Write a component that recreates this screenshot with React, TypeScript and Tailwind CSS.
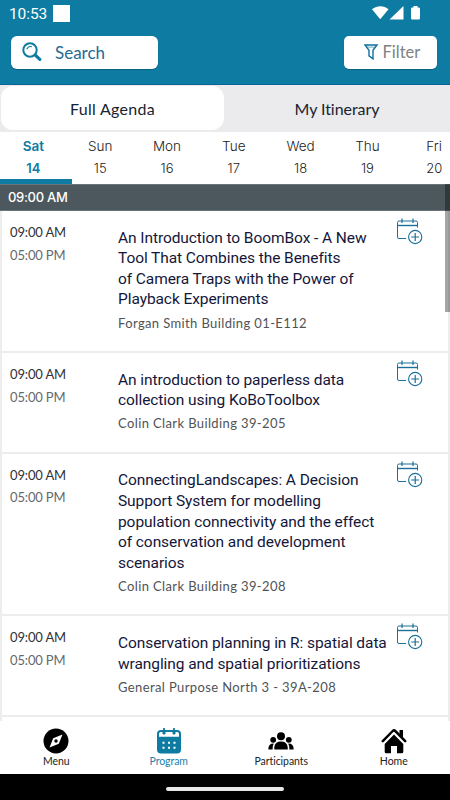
interface Session {
  title: string[];
  room: string;
}

const days = [
  { name: "Sat", date: "14" },
  { name: "Sun", date: "15" },
  { name: "Mon", date: "16" },
  { name: "Tue", date: "17" },
  { name: "Wed", date: "18" },
  { name: "Thu", date: "19" },
  { name: "Fri", date: "20" },
];

const sessions: Session[] = [
  {
    title: [
      "An Introduction to BoomBox - A New",
      "Tool That Combines the Benefits",
      "of Camera Traps with the Power of",
      "Playback Experiments",
    ],
    room: "Forgan Smith Building 01-E112",
  },
  {
    title: ["An introduction to paperless data", "collection using KoBoToolbox"],
    room: "Colin Clark Building 39-205",
  },
  {
    title: [
      "ConnectingLandscapes: A Decision",
      "Support System for modelling",
      "population connectivity and the effect",
      "of conservation and development",
      "scenarios",
    ],
    room: "Colin Clark Building 39-208",
  },
  {
    title: ["Conservation planning in R: spatial data", "wrangling and spatial prioritizations"],
    room: "General Purpose North 3 - 39A-208",
  },
];

function StatusBar() {
  return (
    <div className="flex h-[27px] items-center pl-[9px] pr-[29px] text-white">
      <span className="font-['Roboto',sans-serif] text-[15.5px] leading-[18px] tracking-[-0.1px]">10:53</span>
      <span className="ml-[6px] h-[17px] w-[17px] bg-white" />
      <svg className="ml-auto" width="49" height="16" viewBox="0 0 49 16" fill="currentColor">
        <path d="M0 3.2C5-.8 12-.8 16.5 3.2L8.2 13.2Z" />
        <path d="M31.5 0V13.6H17.5Z" />
        <path d="M41.5 0h4v1.5h1.2q1.3 0 1.3 1.3v9.5q0 1.3-1.3 1.3h-6.4q-1.3 0-1.3-1.3V2.8q0-1.3 1.3-1.3H41.5Z" />
      </svg>
    </div>
  );
}

function SearchIcon() {
  return (
    <svg width="20" height="20" viewBox="0 0 20 20" fill="none" stroke="#0d7ba2">
      <circle cx="8" cy="8" r="6.7" strokeWidth="2" />
      <path d="M4.8 7.2Q6.2 3.8 9.8 4.6" strokeWidth="1.1" />
      <path d="M13.3 13.2l4.5 4.2" strokeWidth="3.2" strokeLinecap="round" />
    </svg>
  );
}

function FunnelIcon() {
  return (
    <svg width="15" height="16" viewBox="0 0 15 16" fill="none" stroke="#0d6f9c" strokeWidth="1.4">
      <path d="M1 1H13L9 6.3V14.8L5 11.8V6.3Z" />
      <path d="M3.4 3.1h7.2" strokeWidth=".6" />
    </svg>
  );
}

function CalendarAddIcon() {
  return (
    <svg width="27" height="27" viewBox="0 0 27 27" fill="none" stroke="#1a7099">
      <path d="M10 20.5H3Q1.5 20.5 1.5 19V4.5Q1.5 3 3 3H20Q21.5 3 21.5 4.5V9.5" strokeWidth="1" />
      <path d="M1.5 7.5h20" strokeWidth="1.4" />
      <path d="M6 .5v4.5M17 .5v4.5" strokeWidth="1.2" />
      <circle cx="19.2" cy="19" r="6.6" strokeWidth="1.1" />
      <path d="M15.2 19h8M19.2 15v8" strokeWidth="1.2" />
    </svg>
  );
}

function MenuIcon() {
  return (
    <svg width="26" height="26" viewBox="0 0 26 26">
      <circle cx="13" cy="13" r="12.5" />
      <path d="M19.5 6.5L15.8 15.8L6.5 19.5L10.2 10.2Z" fill="white" />
      <circle cx="13" cy="13" r="1.7" />
    </svg>
  );
}

function ProgramIcon() {
  return (
    <svg width="26" height="26" viewBox="0 0 26 26">
      <path d="M5 2H21Q25 2 25 6V21.5Q25 25.5 21 25.5H5Q1 25.5 1 21.5V6Q1 2 5 2Z" fill="#0d7ba2" />
      <path d="M3 8.8V6Q3 4 5 4H6.5V6H9.5V4H16.5V6H19.5V4H21Q23 4 23 6V8.8Z" fill="white" />
      <path d="M8 .5V5.8M18 .5V5.8" stroke="#0d7ba2" strokeWidth="1.8" strokeLinecap="round" />
      <path d="M6.5 14.8h2m3.5 0h2m3.5 0h2M6.5 19.8h2m3.5 0h2m3.5 0h2" stroke="white" strokeWidth="2" />
    </svg>
  );
}

function PeopleIcon() {
  return (
    <svg width="26" height="26" viewBox="0 0 26 26">
      <circle cx="13" cy="8.3" r="4" />
      <circle cx="5.2" cy="11.8" r="2.9" />
      <circle cx="20.8" cy="11.8" r="2.9" />
      <path d="M6.3 21.5V19.2Q6.8 13.5 13 13.5T19.7 19.2V21.5Z" />
      <path d="M.3 21.5Q.3 15.5 5.8 15.6Q4.6 17.4 4.6 21.5ZM25.7 21.5Q25.7 15.5 20.2 15.6Q21.4 17.4 21.4 21.5Z" />
    </svg>
  );
}

function HomeIcon() {
  return (
    <svg width="26" height="26" viewBox="0 0 26 26">
      <path d="M18.5 2h3.5v8l-3.5-4Z" />
      <path d="M1.8 13.2L11.7 3Q13 1.7 14.3 3L24.2 13.2" fill="none" stroke="black" strokeWidth="2.5" strokeLinecap="round" />
      <path d="M13 6.5L22.3 16V23.7Q22.3 25.3 20.7 25.3H16V18H10V25.3H5.3Q3.7 25.3 3.7 23.7V16Z" />
    </svg>
  );
}

const navItems = [
  { label: "Menu", Icon: MenuIcon, className: "text-[#222]" },
  { label: "Program", Icon: ProgramIcon, className: "text-[#2381a9]" },
  { label: "Participants", Icon: PeopleIcon, className: "text-[#222]" },
  { label: "Home", Icon: HomeIcon, className: "text-[#222]" },
];

function SessionRow({ session }: { session: Session }) {
  return (
    <article className="flex border-b-2 border-[#ededee] pb-[18.4px] pl-2 pt-[10.2px]">
      <div className="w-[108px] shrink-0 text-[13px] leading-[22.5px] tracking-[-0.15px]">
        <p className="text-[#303235]">09:00 AM</p>
        <p className="text-[#66696c]">05:00 PM</p>
      </div>
      <div className="w-[277.6px] shrink-0 pt-[6.5px]">
        <h2 className="whitespace-nowrap font-['Roboto',sans-serif] text-[15.5px] leading-[20.6px] tracking-[-0.08px] text-[#14163a]">
          {session.title.map((line) => (
            <span key={line} className="block">{line}</span>
          ))}
        </h2>
        <p className="mt-[2.5px] text-[13px] leading-5 tracking-[0.38px] text-[#505356]">
          {session.room}
        </p>
      </div>
      <button className="-mt-[3px] h-[27px] w-[27px]" aria-label="Add to itinerary">
        <CalendarAddIcon />
      </button>
    </article>
  );
}

export default function App() {
  return (
    <div className="flex h-[800px] w-[450px] flex-col overflow-hidden bg-white font-['Lato',sans-serif]">
      <header className="h-[85px] shrink-0 border-b border-[#0b6594] bg-[#0d7ba2]">
        <StatusBar />
        <div className="flex justify-between pl-[11px] pr-[13px] pt-[8.5px]">
          <div className="flex h-[33px] w-[147px] items-center rounded-[6px] bg-white pl-[11px] shadow-[0_1px_1px_#0003]">
            <SearchIcon />
            <span className="ml-[13px] pt-px text-[17px] text-[#276a94]">Search</span>
          </div>
          <button className="flex h-[33px] w-[93px] items-center rounded-[5px] bg-white pl-[20px] shadow-[0_1px_1px_#0003]">
            <FunnelIcon />
            <span className="ml-[3.5px] text-[16.5px] text-[#808284]">Filter</span>
          </button>
        </div>
      </header>

      <div className="flex h-[47px] shrink-0 items-center bg-[#ebebed] pb-px pl-px text-[16px] text-[#172331]">
        <div className="flex h-[44px] w-[223px] items-center justify-center rounded-[12px] bg-white pt-px">
          <span className="tracking-[0.3px]">Full Agenda</span>
        </div>
        <div className="flex flex-1 justify-center pt-px">
          <span className="tracking-[-0.05px]">My Itinerary</span>
        </div>
      </div>

      <nav className="flex h-[52px] shrink-0 overflow-hidden font-['Inter',sans-serif] text-[13.5px]">
        {days.map((day, i) => (
          <div
            key={day.name}
            className={`w-[66.8px] shrink-0 pt-[3px] text-center leading-[22px] ${
              i === 0 ? "font-semibold text-[#0d7ba2]" : "font-light text-[#222]"
            }`}
          >
            <p>{day.name}</p>
            <p className="text-[13px]">{day.date}</p>
            {i === 0 && <div className="h-[5px] w-[72px] bg-[#0d7ba2]" />}
          </div>
        ))}
      </nav>

      <main className="relative flex-1 overflow-hidden">
        <div className="flex h-[27px] items-center border-y border-[#68747a] bg-[#4d585e] pl-2 pt-px font-['Inter',sans-serif] text-[13px] font-medium tracking-[-0.3px] text-white">
          09:00 AM
        </div>
        <div className="h-full border-x-2 border-[#ededee]">
          {sessions.map((session) => (
            <SessionRow key={session.room} session={session} />
          ))}
        </div>
        {/* scroll indicator */}
        <div className="absolute right-0 top-0 h-[128px] w-[5px] bg-black/35" />
      </main>

      <footer className="grid h-[53px] shrink-0 grid-cols-4 bg-white pt-[7px]">
        {navItems.map(({ label, Icon, className }) => (
          <div key={label} className={`flex flex-col items-center text-[10.5px] leading-[14px] tracking-[-0.05px] ${className}`}>
            <Icon />
            <span>{label}</span>
          </div>
        ))}
      </footer>
      <div className="flex h-[26px] shrink-0 items-center justify-center bg-black pb-px pt-[5px]">
        <div className="h-[4px] w-[118px] rounded-full bg-[#e8e8e8]" />
      </div>
    </div>
  );
}
